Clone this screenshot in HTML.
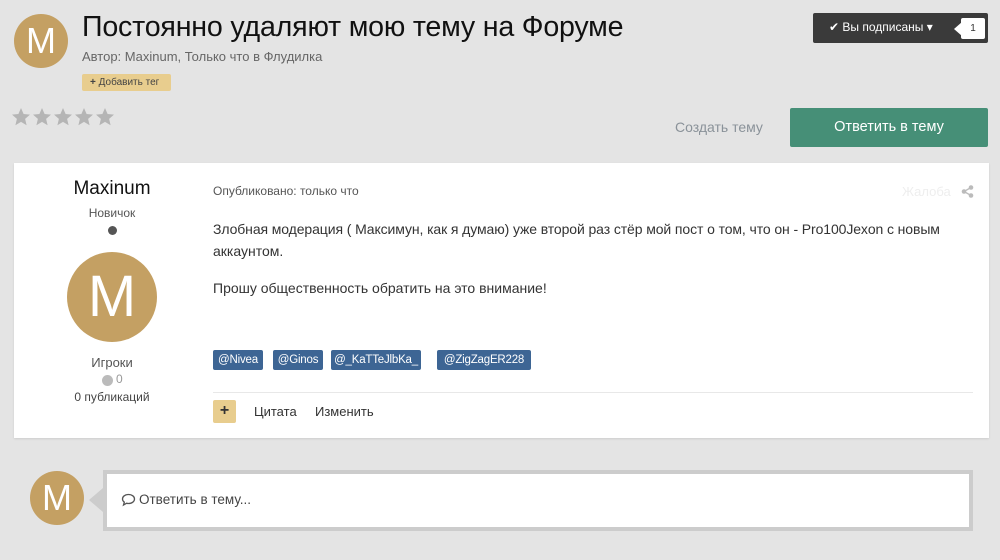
<!DOCTYPE html>
<html><head><meta charset="utf-8"><style>
*{margin:0;padding:0;box-sizing:border-box}
body{width:1000px;height:560px;background:#e4e4e4;font-family:"Liberation Sans",sans-serif;position:relative;overflow:hidden;color:#333}
.a{position:absolute;white-space:nowrap}
.av{position:absolute;border-radius:50%;background:#c4a063;color:#fff;text-align:center}
.m{position:absolute;top:350px;height:20px;background:#3d6594;border-radius:2px;color:#fff;font-size:11.5px;line-height:20px;text-align:center;white-space:nowrap;letter-spacing:-0.2px}
</style></head><body>
<div class="av" style="left:14px;top:14px;width:54px;height:54px;font-size:36px;line-height:54px">M</div>
<div class="a" style="left:82px;top:11px;font-size:28.6px;color:#111;letter-spacing:-0.2px">Постоянно удаляют мою тему на Форуме</div>
<div class="a" style="left:82px;top:49px;font-size:13px;color:#666">Автор: Maxinum, Только что в Флудилка</div>
<div class="a" style="left:82px;top:74px;width:89px;height:17px;background:#e8cd8e;border-radius:2px;font-size:10px;line-height:17px;color:#444;padding-left:8px"><b>+</b> Добавить тег</div>
<svg class="a" style="left:12px;top:107px" width="106" height="20" viewBox="0 0 106 20">
<defs><path id="s" d="M10 1l2.6 6 6.4.6-4.9 4.3 1.5 6.3L10 14.9 4.4 18.2l1.5-6.3L1 7.6l6.4-.6z" fill="#b5b5b5"/></defs>
<use href="#s" x="-1"/><use href="#s" x="20"/><use href="#s" x="41"/><use href="#s" x="62"/><use href="#s" x="83"/></svg>
<div class="a" style="left:813px;top:13px;width:175px;height:30px;background:#3a3a3a;border-radius:2px"></div>
<div class="a" style="left:829px;top:20px;font-size:12px;color:#fff">✔ Вы подписаны ▾</div>
<div class="a" style="left:961px;top:18px;width:24px;height:21px;background:#fff;border-radius:2px;font-size:10px;text-align:center;line-height:21px;color:#333">1</div>
<div class="a" style="left:954px;top:22px;width:0;height:0;border-top:7px solid transparent;border-bottom:7px solid transparent;border-right:8px solid #fff"></div>
<div class="a" style="left:675px;top:119px;font-size:14px;color:#8a9299">Создать тему</div>
<div class="a" style="left:790px;top:108px;width:198px;height:39px;background:#468f77;border-radius:2px;color:#fff;font-size:14.5px;text-align:center;line-height:39px">Ответить в тему</div>
<div class="a" style="left:14px;top:163px;width:975px;height:275px;background:#fff;box-shadow:0 1px 2px rgba(0,0,0,.1)"></div>
<div class="a" style="left:22px;top:178px;width:180px;text-align:center;font-size:19px;color:#111">Maxinum</div>
<div class="a" style="left:22px;top:206px;width:180px;text-align:center;font-size:12px;color:#555">Новичок</div>
<div class="a" style="left:108px;top:226px;width:9px;height:9px;border-radius:50%;background:#555"></div>
<div class="av" style="left:67px;top:252px;width:90px;height:90px;font-size:58px;line-height:90px">M</div>
<div class="a" style="left:22px;top:355px;width:180px;text-align:center;font-size:13px;color:#555">Игроки</div>
<div class="a" style="left:102px;top:375px;width:11px;height:11px;border-radius:50%;background:#bbb"></div>
<div class="a" style="left:116px;top:372px;font-size:12px;color:#999">0</div>
<div class="a" style="left:22px;top:390px;width:180px;text-align:center;font-size:12px;color:#444">0 публикаций</div>
<div class="a" style="left:213px;top:184px;font-size:12px;color:#555">Опубликовано: только что</div>
<div class="a" style="left:902px;top:184px;font-size:13px;color:#eee">Жалоба</div>
<svg class="a" style="left:961px;top:185px" width="13" height="13" viewBox="0 0 13 13"><circle cx="10" cy="2.5" r="2.3" fill="#bbb"/><circle cx="10" cy="10.5" r="2.3" fill="#bbb"/><circle cx="3" cy="6.5" r="2.3" fill="#bbb"/><path d="M10 2.5L3 6.5 10 10.5" stroke="#bbb" stroke-width="1.3" fill="none"/></svg>
<div class="a" style="left:213px;top:221px;font-size:14px;color:#333;letter-spacing:-0.1px">Злобная модерация ( Максимун, как я думаю) уже второй раз стёр мой пост о том, что он - Pro100Jexon с новым</div>
<div class="a" style="left:213px;top:243px;font-size:14px;color:#333">аккаунтом.</div>
<div class="a" style="left:213px;top:280px;font-size:14px;color:#333">Прошу общественность обратить на это внимание!</div>
<div class="m" style="left:213px;width:50px">@Nivea</div>
<div class="m" style="left:273px;width:50px">@Ginos</div>
<div class="m" style="left:331px;width:90px">@_KaTTeJlbKa_</div>
<div class="m" style="left:437px;width:94px">@ZigZagER228</div>
<div class="a" style="left:213px;top:392px;width:760px;height:1px;background:#e8e8e8"></div>
<div class="a" style="left:213px;top:400px;width:23px;height:23px;background:#e8cd8e;border-radius:2px;text-align:center;font-size:16px;font-weight:bold;line-height:22px;color:#333">+</div>
<div class="a" style="left:254px;top:404px;font-size:13px;color:#333">Цитата</div>
<div class="a" style="left:315px;top:404px;font-size:13px;color:#333">Изменить</div>
<div class="av" style="left:30px;top:471px;width:54px;height:54px;font-size:36px;line-height:54px">M</div>
<div class="a" style="left:89px;top:488px;width:0;height:0;border-top:12px solid transparent;border-bottom:12px solid transparent;border-right:14px solid #ccc"></div>
<div class="a" style="left:103px;top:470px;width:870px;height:61px;border:4px solid #ccc;background:#fff"></div>
<svg class="a" style="left:121px;top:493px" width="15" height="14" viewBox="0 0 15 14"><path d="M7.5 1.5C4 1.5 1.5 3.5 1.5 6c0 1.3.7 2.4 1.8 3.2L2.5 12l3.2-1.8c.6.2 1.2.3 1.8.3 3.5 0 6-2 6-4.5s-2.5-4.5-6-4.5z" fill="none" stroke="#555" stroke-width="1.3"/></svg>
<div class="a" style="left:139px;top:492px;font-size:13.5px;color:#444">Ответить в тему...</div>
</body></html>
